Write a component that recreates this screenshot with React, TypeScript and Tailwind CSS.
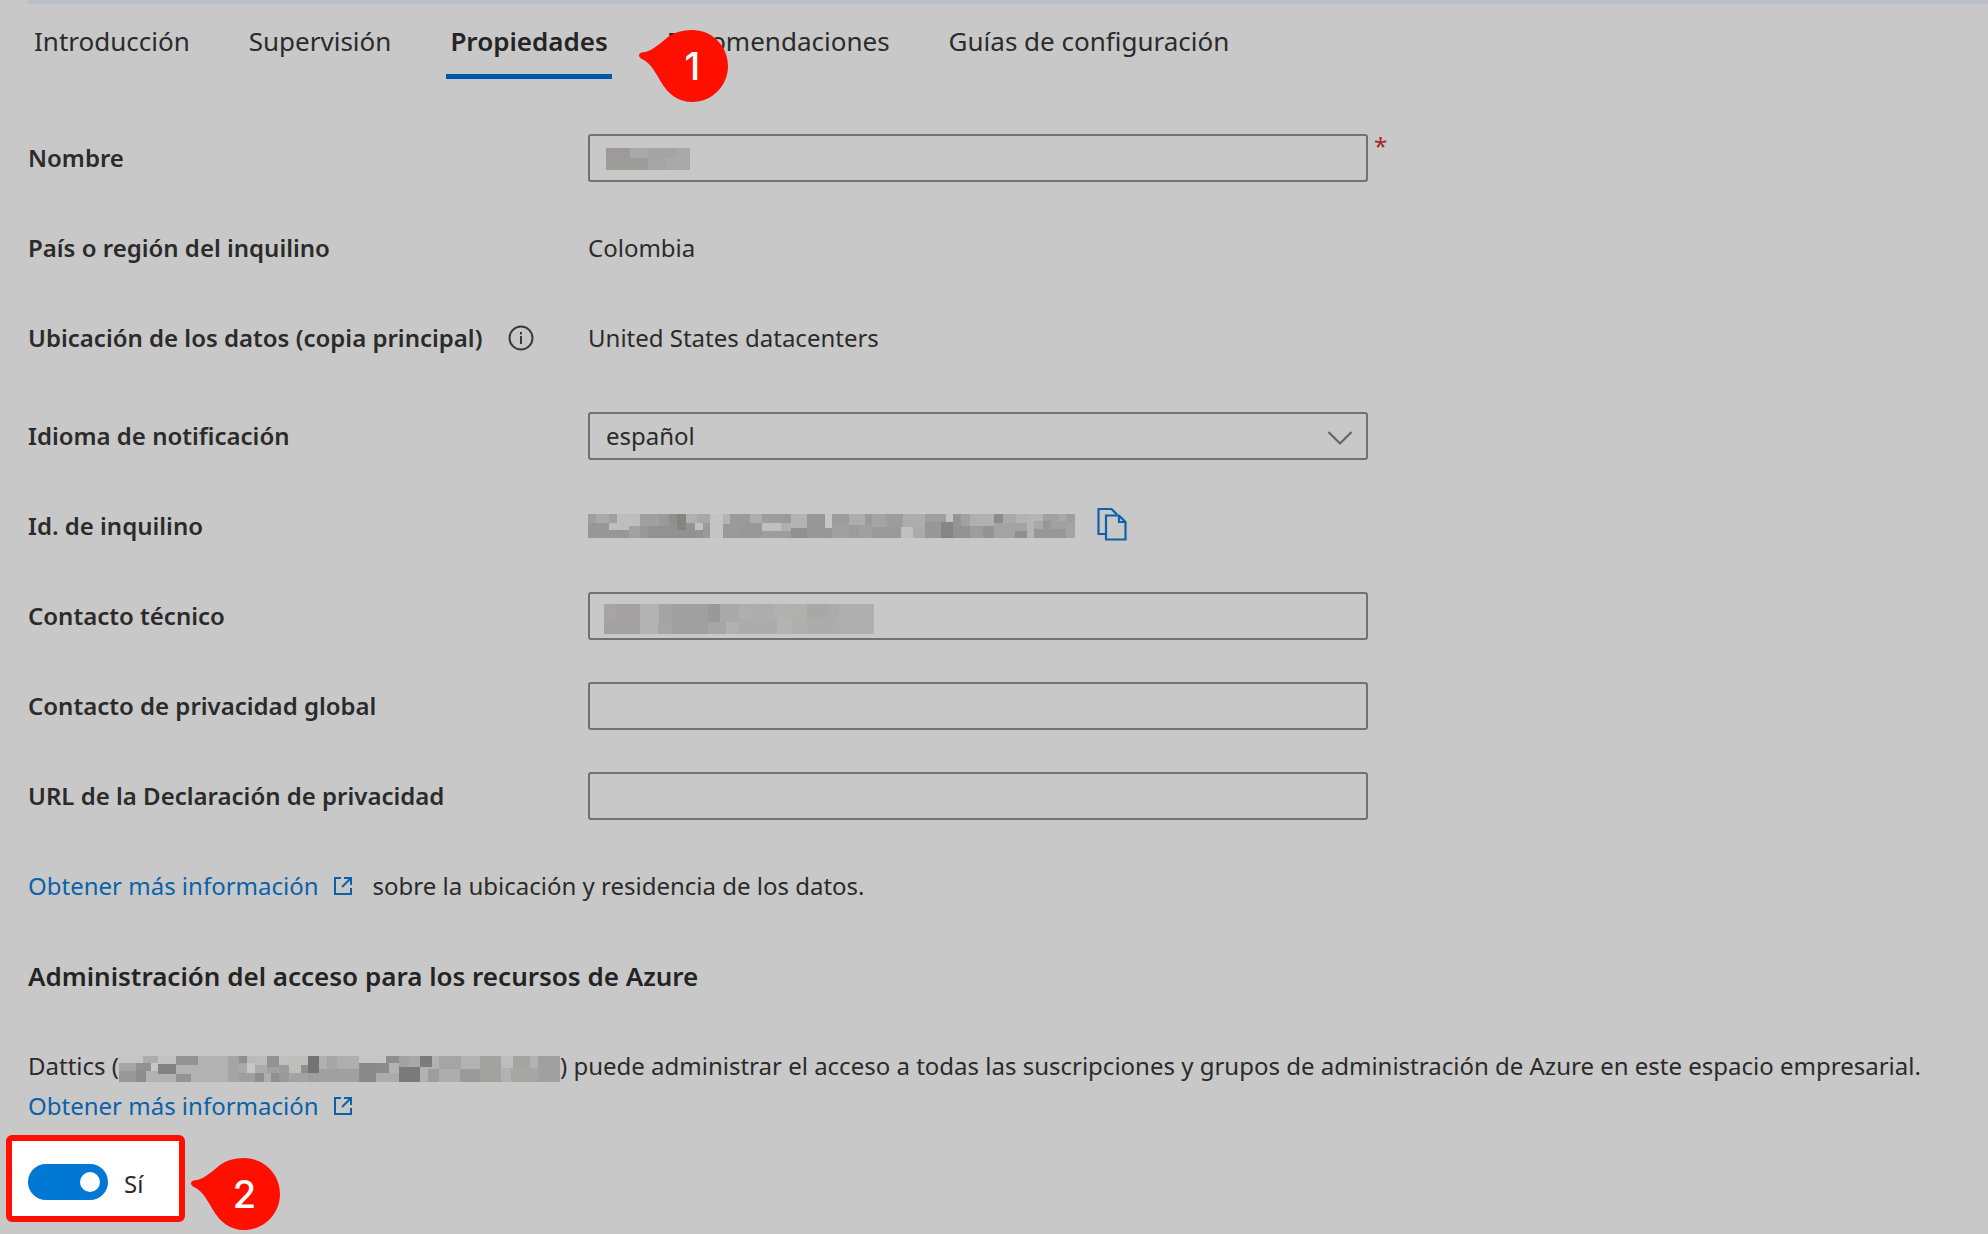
import { ReactNode, useState } from 'react';
import clsx from 'clsx';

type Block = [x: number, y: number, width: number, height: number, color: string];

const nameBlocks: Block[] = [
  [0, 0, 9, 10, '#9b9b9b'], [9, 0, 15, 10, '#9c9a9a'], [24, 0, 18, 10, '#a9a9a9'],
  [42, 0, 28, 10, '#a5a3a3'], [70, 0, 14, 10, '#a9a9a9'], [0, 10, 42, 12, '#9d9c99'],
  [42, 10, 18, 12, '#a7a5a5'], [60, 10, 24, 12, '#a9a9a9'],
];

const tenantIdBlocks: Block[] = [
  [0, 0, 8, 9, '#a0a09e'], [8, 0, 13, 9, '#aaaaaa'], [21, 0, 8, 9, '#9f9f9d'],
  [29, 0, 23, 16, '#bebebe'], [21, 9, 8, 7, '#bebebe'], [52, 0, 19, 12, '#a0a0a0'],
  [71, 0, 10, 12, '#9a9a9a'], [81, 0, 8, 9, '#8f8f8d'], [0, 9, 21, 15, '#979797'],
  [21, 16, 20, 8, '#979795'], [41, 12, 11, 12, '#a2a2a2'], [52, 12, 8, 12, '#989896'],
  [60, 12, 21, 12, '#929292'], [81, 9, 34, 15, '#929290'], [89, 0, 9, 16, '#848482'],
  [98, 0, 11, 9, '#b0b0b0'], [109, 0, 13, 9, '#a8a8a8'], [107, 9, 8, 7, '#c0c0c0'],
  [115, 9, 7, 15, '#9a9a98'], [122, 0, 13, 24, '#c4c4c4'], [135, 0, 7, 10, '#b3b3b3'],
  [142, 0, 20, 10, '#9a9a9a'], [162, 0, 12, 9, '#aeaeae'], [135, 10, 18, 14, '#9a9a9a'],
  [153, 9, 21, 15, '#989896'], [174, 0, 21, 9, '#9d9d9d'], [195, 0, 8, 9, '#9a9a98'],
  [174, 9, 19, 8, '#c0c0c0'], [193, 9, 10, 8, '#b0b0b0'], [174, 17, 29, 7, '#9d9d9d'],
  [203, 0, 16, 14, '#b3b3b3'], [203, 14, 16, 10, '#909090'], [219, 0, 18, 24, '#979797'],
  [237, 14, 7, 10, '#969696'], [237, 0, 7, 14, '#c6c6c6'], [244, 0, 17, 11, '#9d9d9d'],
  [244, 11, 17, 13, '#a0a0a0'], [261, 0, 16, 11, '#adadad'], [277, 0, 7, 11, '#9b9b99'],
  [261, 11, 10, 13, '#9c9c9a'], [271, 11, 13, 13, '#a0a0a0'], [284, 0, 14, 13, '#a4a4a4'],
  [298, 0, 17, 13, '#9d9d9d'], [284, 13, 29, 11, '#9a9a9a'], [315, 0, 22, 13, '#adadad'],
  [313, 13, 12, 11, '#c0c0c0'], [325, 13, 12, 11, '#aaaaaa'], [337, 0, 21, 8, '#9f9f9d'],
  [337, 8, 16, 16, '#979797'], [358, 0, 7, 8, '#c2c2c2'], [353, 8, 12, 16, '#858583'],
  [365, 0, 8, 12, '#959595'], [373, 0, 9, 12, '#a2a2a2'], [365, 12, 17, 12, '#939393'],
  [382, 0, 24, 12, '#b0b0b0'], [382, 12, 13, 12, '#9d9d9b'], [395, 12, 11, 12, '#939393'],
  [406, 0, 9, 9, '#8c8c8a'], [415, 0, 13, 9, '#a9a9a9'], [406, 9, 33, 15, '#a3a3a3'],
  [428, 0, 11, 9, '#b2b2b2'], [427, 17, 12, 7, '#8f8f8d'], [439, 0, 16, 24, '#b5b5b5'],
  [446, 7, 9, 8, '#a8a8a8'], [455, 0, 15, 15, '#a1a1a1'], [470, 0, 8, 7, '#a9a9a9'],
  [470, 7, 8, 8, '#a1a1a1'], [446, 15, 32, 9, '#979795'], [478, 0, 9, 8, '#9f9f9d'],
  [478, 8, 9, 16, '#a4a4a4'], [455, 7, 8, 8, '#979795'],
];

const contactBlocks: Block[] = [
  [0, 0, 13, 18, '#a6a4a4'], [13, 0, 23, 30, '#a3a1a1'], [0, 18, 13, 12, '#a3a1a1'],
  [36, 0, 19, 30, '#b3b3b3'], [55, 0, 13, 18, '#a4a4a4'], [54, 18, 14, 12, '#a6a6a6'],
  [68, 0, 36, 30, '#a0a0a0'], [104, 0, 12, 18, '#999999'], [116, 0, 19, 18, '#a9a9a9'],
  [104, 18, 18, 12, '#a6a6a6'], [122, 18, 13, 12, '#b1b1b1'], [135, 0, 18, 15, '#aeaeae'],
  [153, 0, 17, 15, '#adadad'], [135, 15, 38, 15, '#acacac'], [170, 0, 15, 15, '#b1b1b1'],
  [173, 15, 15, 15, '#b3b3b3'], [185, 0, 18, 15, '#b0b0ac'], [188, 15, 15, 15, '#afafab'],
  [203, 0, 20, 14, '#a9a8a5'], [223, 0, 12, 14, '#ababab'], [203, 14, 32, 16, '#acacac'],
  [235, 0, 35, 30, '#afafaf'],
];

const accountBlocks: Block[] = [
  [0, 0, 441, 26, '#b2b2b2'],
  [0, 0, 24, 7, '#c5c5c5'], [24, 0, 15, 7, '#acacac'], [39, 0, 18, 8, '#c2c2c2'],
  [57, 0, 22, 9, '#929292'], [0, 7, 17, 8, '#a6a6a4'], [17, 7, 15, 8, '#929290'],
  [32, 7, 7, 8, '#c6c6c6'], [39, 8, 18, 10, '#828280'], [0, 15, 17, 11, '#999999'],
  [17, 15, 10, 11, '#8d8d8b'], [57, 18, 15, 8, '#939393'], [109, 0, 11, 26, '#a5a5a5'],
  [120, 0, 8, 7, '#8f8f8f'], [120, 7, 8, 10, '#a9a9a9'], [128, 0, 8, 7, '#b8b8b8'],
  [128, 7, 8, 10, '#c6c6c6'], [136, 0, 12, 9, '#bcbcbc'], [136, 9, 12, 8, '#aaaaaa'],
  [148, 0, 12, 11, '#929292'], [148, 11, 12, 6, '#a0a0a0'], [120, 17, 16, 9, '#9f9f9d'],
  [136, 17, 9, 9, '#8e8e8c'], [145, 17, 7, 9, '#aeaeae'], [152, 17, 8, 9, '#8f8f8d'],
  [160, 0, 10, 9, '#bfbfbf'], [160, 9, 10, 17, '#9b9b9b'], [170, 0, 12, 17, '#bebebc'],
  [182, 0, 7, 9, '#bebebe'], [182, 9, 7, 8, '#8f8f8d'], [170, 17, 19, 9, '#a3a3a1'],
  [189, 0, 11, 17, '#737373'], [189, 17, 11, 9, '#9e9e9c'], [200, 0, 8, 13, '#b0b0ae'],
  [208, 0, 10, 13, '#a5a5a5'], [218, 0, 22, 13, '#aeaeac'], [200, 13, 40, 13, '#a0a0a0'],
  [240, 0, 27, 7, '#c6c6c6'], [240, 7, 17, 19, '#8a8a8a'], [257, 7, 13, 10, '#8c8c8c'],
  [257, 17, 23, 9, '#acacac'], [267, 0, 13, 7, '#8f8f8d'], [280, 0, 10, 11, '#a2a2a0'],
  [290, 0, 11, 11, '#a8a8a8'], [280, 11, 21, 15, '#7a7a78'], [301, 0, 12, 11, '#7b7b79'],
  [309, 13, 11, 13, '#9d9d9b'], [320, 0, 22, 13, '#a5a5a5'], [320, 13, 21, 13, '#adadab'],
  [341, 13, 20, 13, '#9a9a9a'], [361, 0, 21, 26, '#a2a29f'], [382, 0, 12, 12, '#bdbdbd'],
  [394, 0, 17, 12, '#a4a4a1'], [392, 12, 27, 14, '#a6a6a3'], [419, 0, 22, 26, '#a0a0a0'],
];

type MosaicProps = {
  blocks: Block[];
  width: number;
  height: number;
  className?: string;
};

function Mosaic({ blocks, width, height, className }: MosaicProps) {
  return (
    <svg
      width={width}
      height={height}
      shapeRendering="crispEdges"
      aria-hidden="true"
      className={clsx('shrink-0', className)}
    >
      {blocks.map(([x, y, w, h, color], index) => (
        <rect
          key={index}
          x={x}
          y={y}
          width={w}
          height={h}
          fill={color}
        />
      ))}
    </svg>
  );
}

function Marker({ label, className }: { label: string; className?: string }) {
  return (
    <span
      className={clsx(
        'pointer-events-none absolute flex h-[72px] w-[89px] items-center justify-center pl-[18px]',
        className
      )}
    >
      <svg
        viewBox="0 0 89 72"
        className="absolute inset-0 h-full w-full"
        aria-hidden="true"
      >
        <path
          d="M3 22.5C11 22 18 16 26 9.5C33 3.5 41 0 53 0C73 0 89 16 89 36S73 72 53 72C39 72 29 64 22 52C16 42 12 33 3 29C-1 27-1 23 3 22.5Z"
          fill="#ff0f00"
        />
      </svg>
      <span className="relative font-[Inter,sans-serif] text-[38px] leading-none font-medium text-white">
        {label}
      </span>
    </span>
  );
}

function ExternalLink() {
  return (
    <a
      href="#informacion"
      className="inline-flex items-center gap-[14px] text-[#0c62aa]"
    >
      Obtener más información
      <svg
        width="20"
        height="20"
        viewBox="0 0 20 20"
        fill="none"
        stroke="currentColor"
        strokeWidth="2"
        aria-hidden="true"
      >
        <path d="M8 2H2V18H18V12M11 2H18V9M18 2L9 11" />
      </svg>
    </a>
  );
}

type RowProps = {
  label: string;
  htmlFor?: string;
  icon?: ReactNode;
  className?: string;
  children: ReactNode;
};

function Row({ label, htmlFor, icon, className, children }: RowProps) {
  const Label = htmlFor ? 'label' : 'span';

  return (
    <div className={clsx('flex h-12 items-center', className)}>
      <div className="flex w-[560px] shrink-0 items-center gap-[26px]">
        <Label
          htmlFor={htmlFor}
          className="font-semibold"
        >
          {label}
        </Label>
        {icon}
      </div>
      {children}
    </div>
  );
}

const fieldClass =
  'h-12 w-full rounded-[3px] border-2 border-[#717171] bg-transparent px-4 outline-none';

function Field({ id, children }: { id: string; children?: ReactNode }) {
  return (
    <div className="relative max-w-[780px] grow">
      <input
        id={id}
        type="text"
        className={fieldClass}
      />
      {children}
    </div>
  );
}

const tabs = [
  'Introducción',
  'Supervisión',
  'Propiedades',
  'Recomendaciones',
  'Guías de configuración',
];

export default function App() {
  const [activeTab, setActiveTab] = useState('Propiedades');
  const [enabled, setEnabled] = useState(true);

  return (
    <main className="min-h-screen w-full bg-[#c8c8c8] font-['Noto_Sans',sans-serif] text-2xl leading-10 text-[#2b2b2b]">
      <div className="ml-7 h-1 bg-[#b9bfc8]" />
      <nav className="flex gap-[51px] pt-4 pl-[30px] text-[26px]">
        {tabs.map((tab) => (
          <button
            key={tab}
            type="button"
            onClick={() => setActiveTab(tab)}
            className={clsx(
              'relative h-[59px] border-b-[5px] px-1 pb-3 whitespace-nowrap',
              tab === activeTab
                ? 'border-[#0058a8] font-semibold text-[#242424]'
                : 'border-transparent'
            )}
          >
            {tab}
            {tab === 'Recomendaciones' && (
              <Marker
                label="1"
                className="top-[10px] -left-6"
              />
            )}
          </button>
        ))}
      </nav>

      <form className="flex flex-col gap-[42px] px-7 pt-[55px]">
        <Row
          label="Nombre"
          htmlFor="nombre"
        >
          <Field id="nombre">
            <Mosaic
              blocks={nameBlocks}
              width={84}
              height={22}
              className="absolute top-[14px] left-[18px]"
            />
          </Field>
          <span className="ml-[6px] self-start leading-6 text-[#a4262c]">*</span>
        </Row>
        <Row label="País o región del inquilino">Colombia</Row>
        <Row
          label="Ubicación de los datos (copia principal)"
          icon={
            <svg
              width="26"
              height="26"
              viewBox="0 0 26 26"
              fill="none"
              stroke="#3a3a3a"
              strokeWidth="2"
              aria-hidden="true"
            >
              <circle
                cx="13"
                cy="13"
                r="11.5"
              />
              <path d="M13 11V19M13 7V9.5" />
            </svg>
          }
        >
          United States datacenters
        </Row>
        <Row
          label="Idioma de notificación"
          htmlFor="idioma"
          className="mt-2"
        >
          <div className="relative max-w-[780px] grow">
            <select
              id="idioma"
              className={clsx(fieldClass, 'appearance-none leading-10')}
            >
              <option>español</option>
            </select>
            <svg
              width="26"
              height="16"
              viewBox="0 0 26 16"
              fill="none"
              stroke="#666666"
              strokeWidth="2.2"
              className="pointer-events-none absolute top-[18px] right-[15px]"
              aria-hidden="true"
            >
              <path d="M1.5 2L13 13.5L24.5 2" />
            </svg>
          </div>
        </Row>
        <Row label="Id. de inquilino">
          <Mosaic
            blocks={tenantIdBlocks}
            width={487}
            height={24}
          />
          <button
            type="button"
            aria-label="Copiar"
            className="ml-[22px] pb-1 text-[#0c62aa]"
          >
            <svg
              width="30"
              height="34"
              viewBox="0 0 30 34"
              fill="none"
              stroke="currentColor"
              strokeWidth="2.2"
            >
              <path d="M9 27H1.5V2H14.5L20 7.5M9 8.5H22L28.5 15V32.5H9ZM22 8.5V15H28.5" />
            </svg>
          </button>
        </Row>
        <Row
          label="Contacto técnico"
          htmlFor="contacto"
        >
          <Field id="contacto">
            <Mosaic
              blocks={contactBlocks}
              width={270}
              height={30}
              className="absolute top-3 left-4"
            />
          </Field>
        </Row>
        <Row
          label="Contacto de privacidad global"
          htmlFor="privacidad"
        >
          <Field id="privacidad" />
        </Row>
        <Row
          label="URL de la Declaración de privacidad"
          htmlFor="url"
        >
          <Field id="url" />
        </Row>
      </form>

      <section className="px-7 pt-[46px]">
        <p className="flex items-center gap-5">
          <ExternalLink />
          sobre la ubicación y residencia de los datos.
        </p>
        <h2 className="mt-[50px] text-[26px] font-semibold text-[#242424]">
          Administración del acceso para los recursos de Azure
        </h2>
        <p className="mt-[50px]">
          Dattics (
          <Mosaic
            blocks={accountBlocks}
            width={441}
            height={26}
            className="inline-block"
          />
          ) puede administrar el acceso a todas las suscripciones y grupos de
          administración de Azure en este espacio empresarial.
        </p>
        <ExternalLink />
      </section>

      <div className="relative mt-[9px] ml-[6px] flex h-[87px] w-[179px] items-center gap-4 rounded-md border-[6px] border-[#ff0f00] bg-white pt-[6px] pl-4">
        <button
          type="button"
          role="switch"
          aria-checked={enabled}
          aria-labelledby="estado"
          onClick={() => setEnabled(!enabled)}
          className={clsx(
            'flex h-9 w-20 items-center rounded-full px-2',
            enabled ? 'justify-end bg-[#0078d4]' : 'justify-start bg-[#8a8886]'
          )}
        >
          <span className="h-5 w-5 rounded-full bg-white" />
        </button>
        <span
          id="estado"
          className="pt-1"
        >
          {enabled ? 'Sí' : 'No'}
        </span>
        <Marker
          label="2"
          className="top-[17px] left-[179px]"
        />
      </div>
    </main>
  );
}
